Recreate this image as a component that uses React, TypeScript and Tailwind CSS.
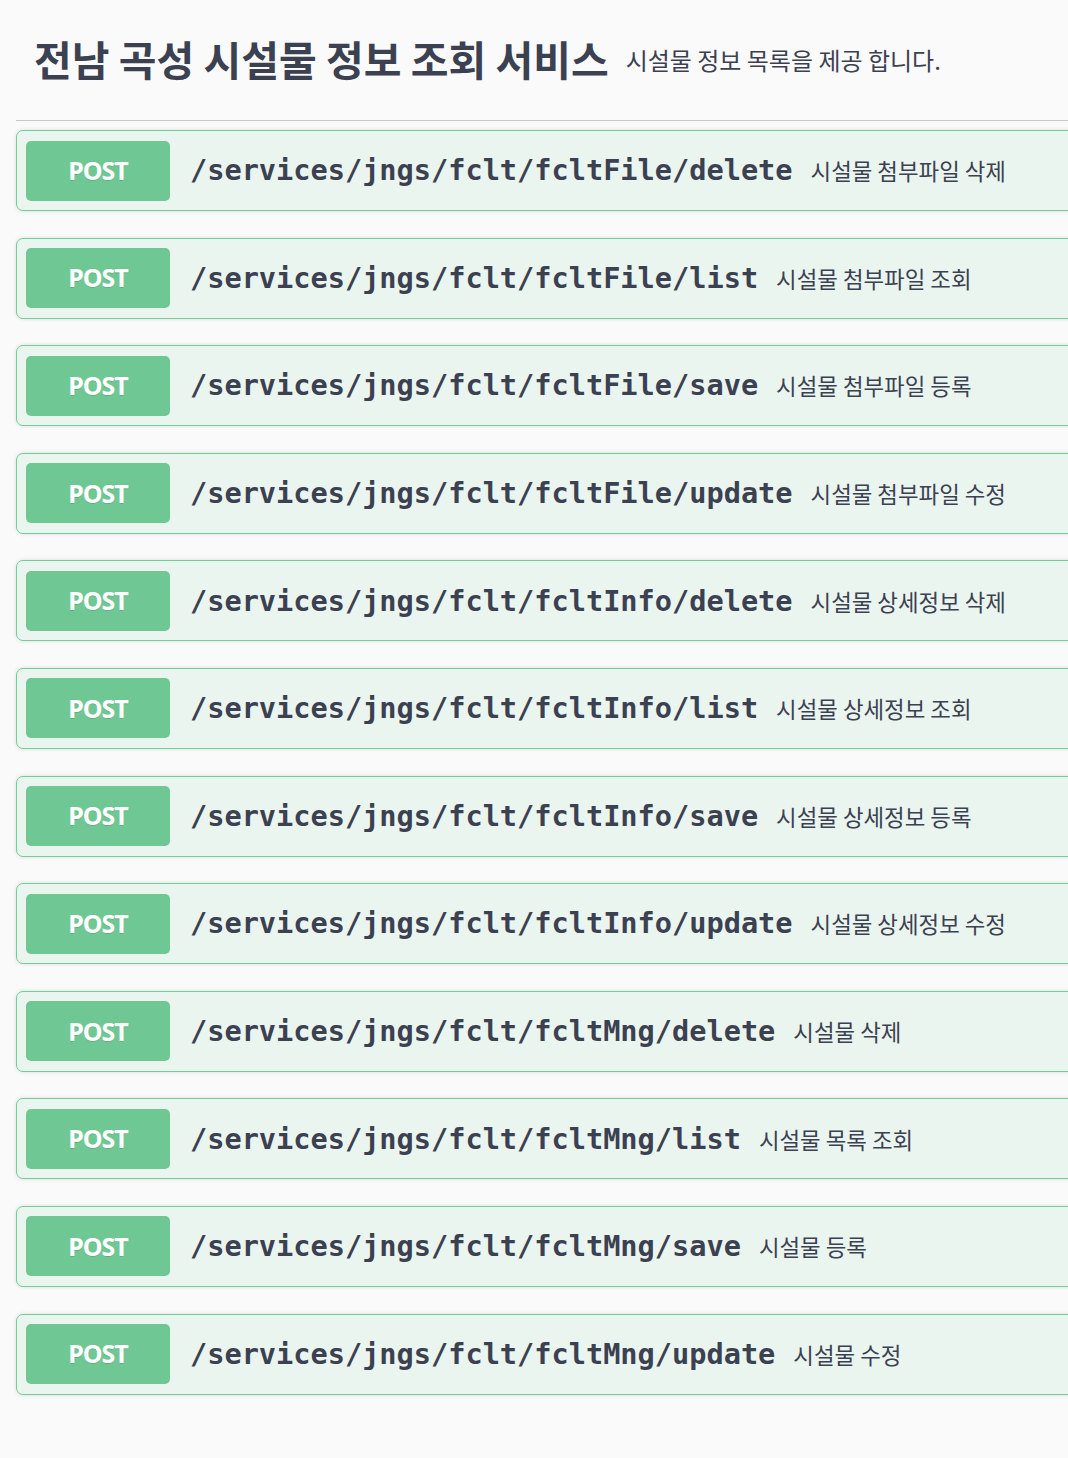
const ops = [
  { path: "/services/jngs/fclt/fcltFile/delete", desc: "시설물 첨부파일 삭제" },
  { path: "/services/jngs/fclt/fcltFile/list", desc: "시설물 첨부파일 조회" },
  { path: "/services/jngs/fclt/fcltFile/save", desc: "시설물 첨부파일 등록" },
  { path: "/services/jngs/fclt/fcltFile/update", desc: "시설물 첨부파일 수정" },
  { path: "/services/jngs/fclt/fcltInfo/delete", desc: "시설물 상세정보 삭제" },
  { path: "/services/jngs/fclt/fcltInfo/list", desc: "시설물 상세정보 조회" },
  { path: "/services/jngs/fclt/fcltInfo/save", desc: "시설물 상세정보 등록" },
  { path: "/services/jngs/fclt/fcltInfo/update", desc: "시설물 상세정보 수정" },
  { path: "/services/jngs/fclt/fcltMng/delete", desc: "시설물 삭제" },
  { path: "/services/jngs/fclt/fcltMng/list", desc: "시설물 목록 조회" },
  { path: "/services/jngs/fclt/fcltMng/save", desc: "시설물 등록" },
  { path: "/services/jngs/fclt/fcltMng/update", desc: "시설물 수정" },
];

const kr = { fontFamily: '"Noto Sans CJK KR", "Noto Sans", sans-serif' };

export default function App() {
  return (
    <div className="min-h-screen overflow-hidden bg-[#fafafa] text-[#3b4151]" style={kr}>
      {/* Header */}
      <div className="flex h-[120px] items-center pl-[34px] pb-[4px]">
        <h2 className="text-[41px] font-bold leading-none">
          전남 곡성 시설물 정보 조회 서비스
        </h2>
        <span className="ml-[17px] mt-[4px] text-[24px] leading-none">
          시설물 정보 목록을 제공 합니다.
        </span>
      </div>

      {/* Operations */}
      <div className="ml-4 w-[1120px] border-t border-[#c6c7cb] pt-[9px]">
        {ops.map((op) => (
          <div
            key={op.path}
            className="mb-[26.6px] flex h-[81px] items-center rounded-[7px] border border-[#6fcf97] bg-[#ebf5ef] px-[9px] shadow-[0_0_4px_rgba(0,0,0,0.12)]"
          >
            <div
              className="flex h-[60px] w-[144px] shrink-0 items-center justify-center rounded-[5px] bg-[#6fc894] text-[25px] font-bold tracking-[-1px] text-white [text-shadow:0_1px_0_rgba(0,0,0,0.12)]"
              style={{ fontFamily: '"Noto Sans", sans-serif' }}
            >
              POST
            </div>
            <span
              className="ml-[20px] text-[28.6px] font-bold leading-none"
              style={{ fontFamily: '"DejaVu Sans Mono", monospace' }}
            >
              {op.path}
            </span>
            <span className="ml-[18px] text-[22.4px] leading-none">
              {op.desc}
            </span>
          </div>
        ))}
      </div>
    </div>
  );
}
